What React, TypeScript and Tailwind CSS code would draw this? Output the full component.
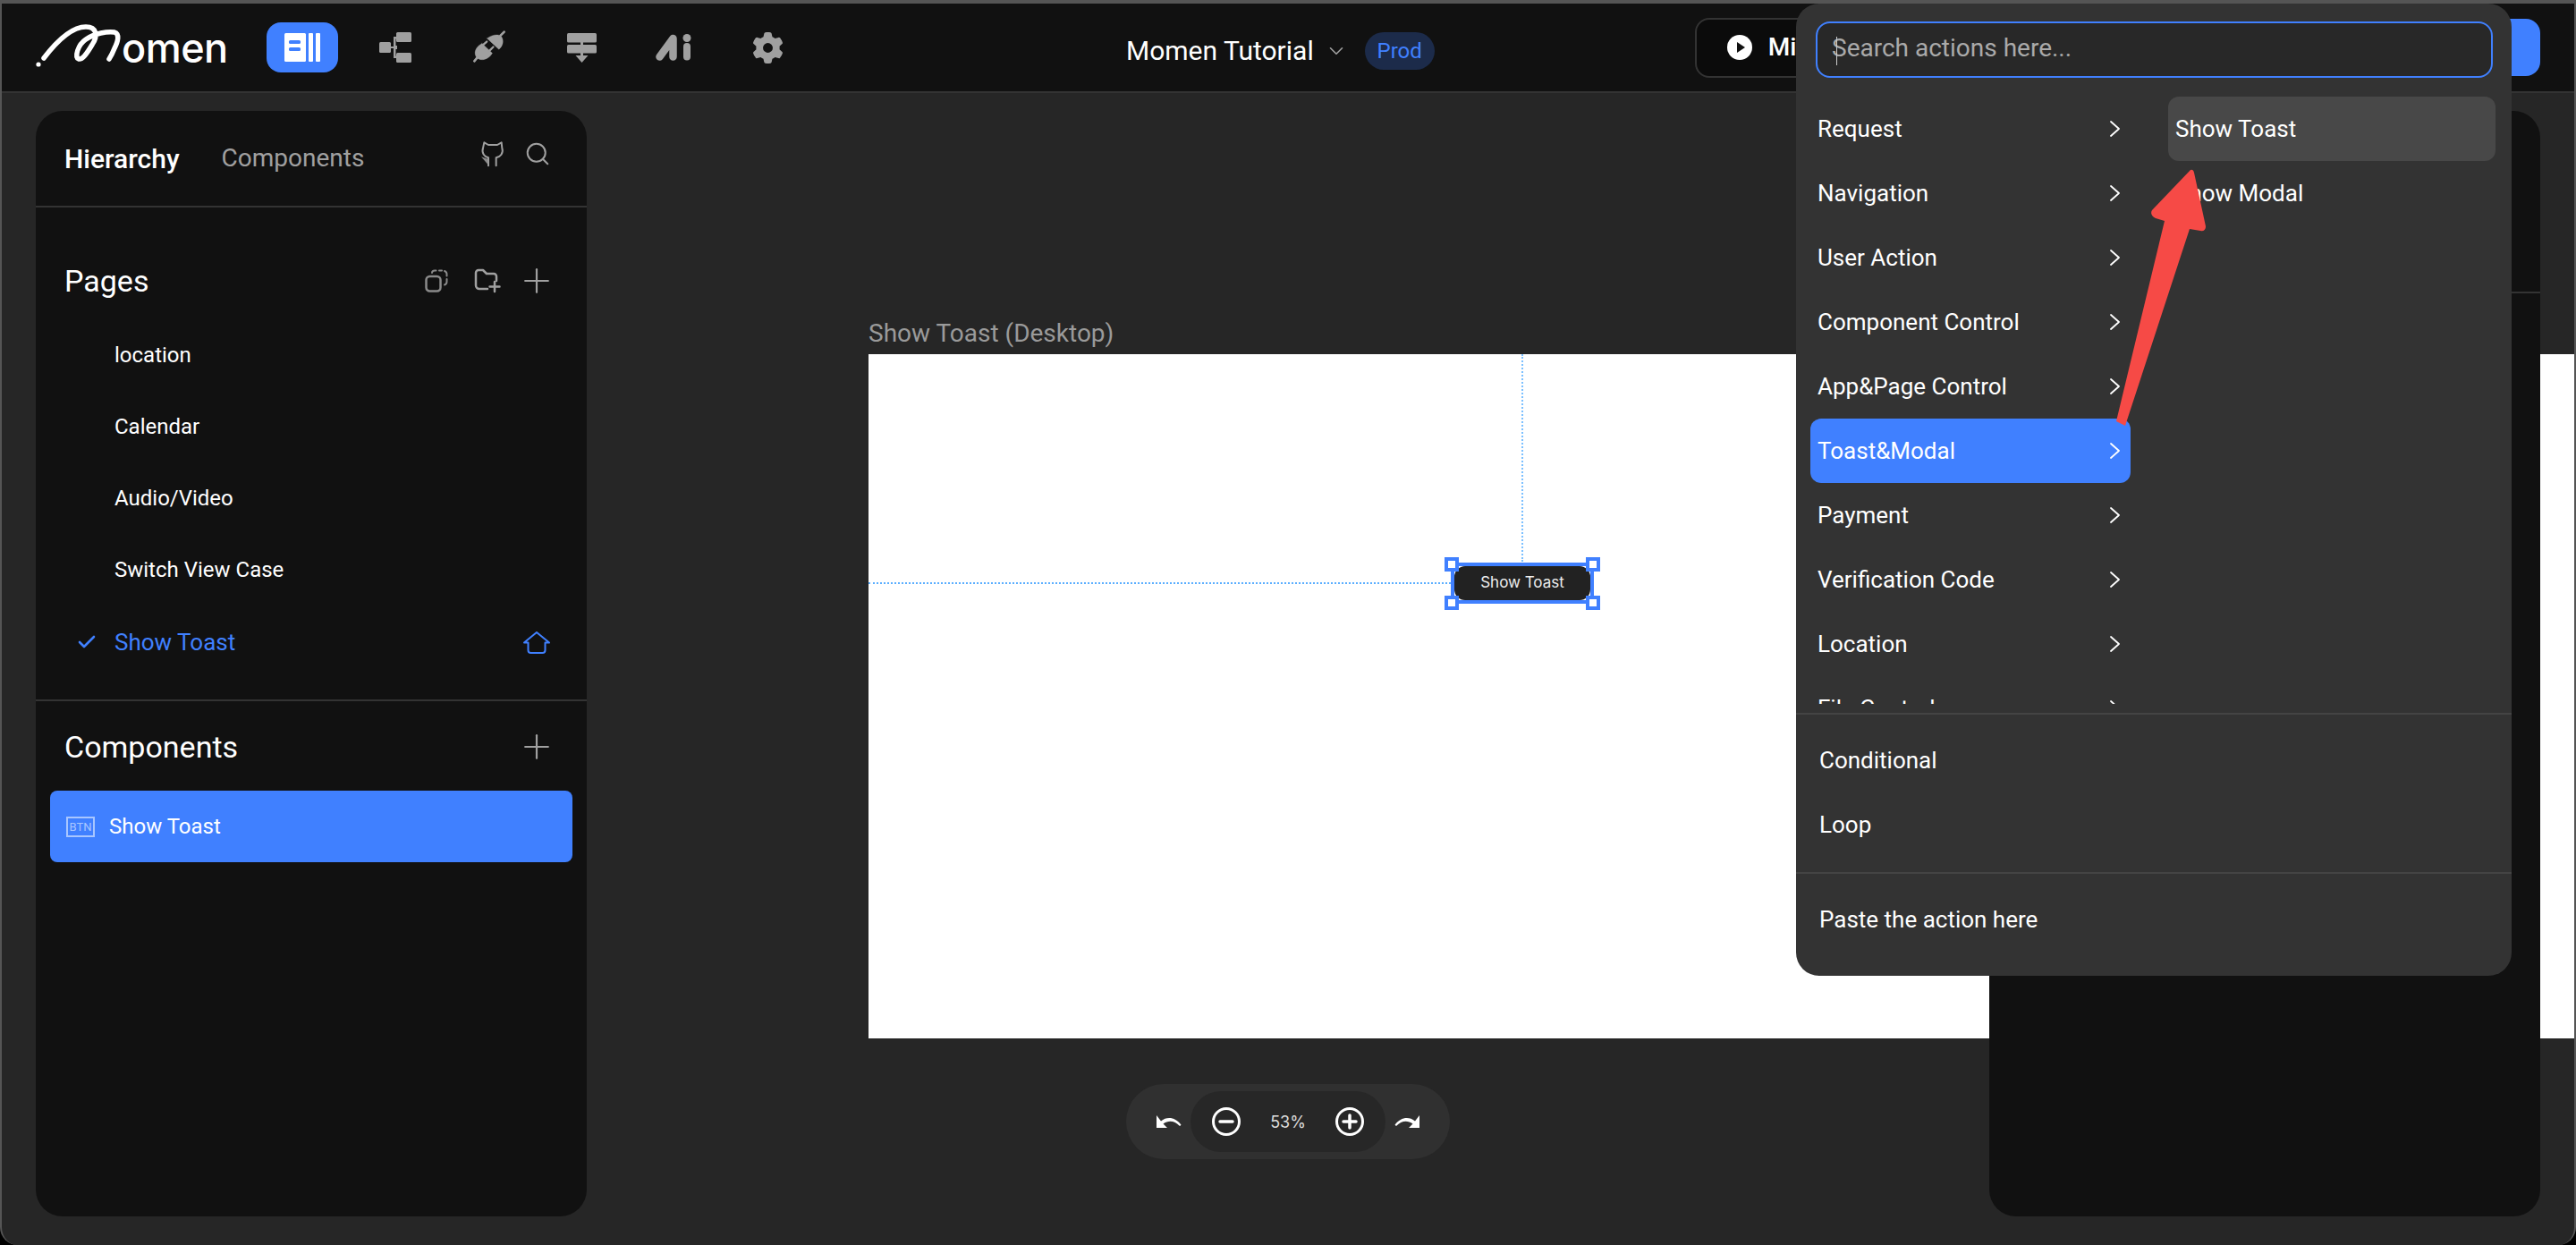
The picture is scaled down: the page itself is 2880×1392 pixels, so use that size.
import { Check, ChevronDown, Plus, Search } from "lucide-react";
import { FaGear } from "react-icons/fa6";

const pages = ["location", "Calendar", "Audio/Video", "Switch View Case"];
const actions = ["Request", "Navigation", "User Action", "Component Control", "App&Page Control", "Toast&Modal", "Payment", "Verification Code", "Location", "File Control"];

function Logo() {
  return (
    <div className="flex items-center w-[218px] h-[60px] relative">
      <svg width="100" height="60" viewBox="40 25 100 60" fill="none" stroke="white" strokeWidth="5.500" strokeLinecap="round" strokeLinejoin="round" className="shrink-0">
        <circle cx="43" cy="74" r="2.6" fill="white" stroke="none" />
        <path d="M49 67 C62 50 80 32 96 32 C108 32 110 42 103 52 C97 62 92 69 88 68 C83 66 87 52 96 46 C106 39 120 37 128 38 C134 40 132 48 128 56 C126 61 124 65 122 68" />
      </svg>
      <span className="font-['Inter',sans-serif] text-[45px] leading-none font-medium text-white -ml-[4px] mt-[1px] tracking-[-0.5px]">omen</span>
    </div>
  );
}

function TreeIcon() {
  return (
    <svg width="36" height="34" viewBox="0 0 36 34" fill="#a0a0a0">
      <rect x="0" y="11" width="13" height="12" rx="1.5" />
      <rect x="19" y="0" width="17" height="11" rx="1.5" />
      <rect x="19" y="23" width="17" height="11" rx="1.5" />
      <path d="M13 16h3V5h4v2.500h-1.500V15H20v4h-1.500v7.500H20V29h-4V18h-3z" />
    </svg>
  );
}

function PlugIcon() {
  return (
    <svg width="38" height="38" viewBox="35 25 115 115" fill="#a0a0a0" stroke="#a0a0a0" strokeLinecap="round" className="-mt-[2px]">
      <path d="M85 55 L125 92 C135 85 142 70 137 55 C135 42 110 36 85 55z" strokeWidth="1" />
      <path d="M130 46 L143 33" strokeWidth="8" />
      <path d="M68 72 L103 105 C92 125 65 135 50 120 C38 105 45 85 68 72z" strokeWidth="1" />
      <path d="M42 132 L52 120" strokeWidth="8" />
      <path d="M70 78 L84 66 M92 98 L106 84" strokeWidth="7" />
    </svg>
  );
}

function StackIcon() {
  return (
    <svg width="33" height="33" viewBox="0 0 33 33" fill="#a0a0a0">
      <rect x="0" y="0" width="33" height="10.500" rx="1.5" />
      <rect x="0" y="13" width="33" height="9.500" rx="1.5" />
      <path d="M15 10h3v3h-3zM15 22h3v3h5.500l-7 8-7-8H15z" />
    </svg>
  );
}

function AiIcon() {
  return (
    <svg width="42" height="30" viewBox="0 0 42 30" fill="none" stroke="#a0a0a0" strokeLinecap="round">
      <path d="M4.500 25.500 L19.500 5 V25.500" strokeWidth="8.500" strokeLinejoin="round" />
      <path d="M35 14 V25.500" strokeWidth="8" />
      <circle cx="35" cy="4.500" r="4.500" fill="#a0a0a0" stroke="none" />
    </svg>
  );
}

function HeaderNav() {
  return (
    <div className="flex items-center">
      <div className="w-[80px] h-[56px] rounded-2xl bg-[#4080ff] flex items-center justify-center">
        <svg width="40" height="32" viewBox="0 0 40 32">
          <rect x="0" y="0" width="24" height="32" rx="1.5" fill="white" />
          <rect x="5" y="8" width="13" height="4" rx="1.5" fill="#4080ff" />
          <rect x="5" y="16" width="13" height="4" rx="1.5" fill="#4080ff" />
          <rect x="27" y="0" width="5" height="32" rx="1" fill="white" />
          <rect x="35" y="0" width="5" height="32" rx="1" fill="white" />
        </svg>
      </div>
      <div className="ml-[46px]"><TreeIcon /></div>
      <div className="ml-[68px]"><PlugIcon /></div>
      <div className="ml-[68px]"><StackIcon /></div>
      <div className="ml-[66px]"><AiIcon /></div>
      <FaGear className="ml-[66px] text-[#a0a0a0]" size={35} />
    </div>
  );
}

function Header() {
  return (
    <header className="h-[100px] shrink-0 bg-[#111111] border-b-2 border-[#333333] flex items-center pl-[38px] pr-[38px]">
      <Logo />
      <div className="ml-[40px]"><HeaderNav /></div>
      <div className="ml-[383px] mt-[8px] flex items-center">
        <span className="text-[30px] leading-none text-white font-['Roboto',sans-serif]">Momen Tutorial</span>
        <ChevronDown className="ml-[12px] text-[#a0a0a0]" size={26} strokeWidth={1.5} />
        <span className="ml-[19px] h-[42px] w-[78px] rounded-full bg-[#1c2b4a] text-[#4080ff] text-[24px] flex items-center justify-center font-['Roboto',sans-serif]">Prod</span>
      </div>
      <div className="ml-[291px] h-[67px] w-[300px] border-2 border-[#333333] rounded-2xl bg-[#0b0b0b] flex items-center pl-[34px]">
        <svg width="28" height="28" viewBox="0 0 28 28">
          <circle cx="14" cy="14" r="14" fill="white" />
          <path d="M11 8l9 6-9 6z" fill="#111111" />
        </svg>
        <span className="ml-[18px] text-[28px] text-white font-['Roboto',sans-serif] font-medium">Mirror</span>
      </div>
      <div className="ml-auto h-[64px] w-[120px] rounded-2xl bg-[#4080ff]" />
    </header>
  );
}

function GithubCat() {
  return (
    <svg width="28" height="30" viewBox="222 20 84 90" fill="none" stroke="#a0a0a0" strokeWidth="6" strokeLinecap="round" strokeLinejoin="round">
      <path d="M252 105 V78 C240 76 228 62 234 46 L238 27 L252 35 H282 L296 27 L298 46 C304 62 292 76 278 78 V105" />
      <path d="M228 75 L250 82 L250 100 Z" fill="#8a8a8a" stroke="none" />
    </svg>
  );
}

function CopyIcon() {
  return (
    <svg width="26" height="26" viewBox="0 0 26 26" fill="none" stroke="#8a8a8a" strokeWidth="2.500" strokeLinecap="round">
      <rect x="1.500" y="8" width="16" height="16.500" rx="4" />
      <path d="M8 4c0-1.500 1-2.500 3-2.500h1.500M16 1.500h3M22 2c1.500.5 2.500 2 2.500 3.500v2M24.500 11v3c0 2-1 3-2.500 3.500" strokeWidth="2" />
    </svg>
  );
}

function FolderPlusIcon() {
  return (
    <svg width="30" height="28" viewBox="0 0 30 28" fill="none" stroke="#a0a0a0" strokeWidth="2.500" strokeLinecap="round" strokeLinejoin="round">
      <path d="M15 23H6a4 4 0 0 1-4-4V5a3 3 0 0 1 3-3h5l4 4h8a3 3 0 0 1 3 3v5" />
      <path d="M23 15v11M17.500 20.500h11" />
    </svg>
  );
}

function HomeIcon() {
  return (
    <svg width="30" height="25" viewBox="0 0 30 25" fill="none" stroke="#4080ff" strokeWidth="2" strokeLinejoin="round">
      <path d="M1 12.500 15 1l14 11.500h-4.500V21a3 3 0 0 1-3 3H8.500a3 3 0 0 1-3-3v-8.500z" />
    </svg>
  );
}

function LeftPanel() {
  return (
    <aside className="w-[616px] h-[1236px] rounded-[30px] bg-[#111111] font-['Roboto',sans-serif] flex flex-col">
      <div className="h-[108px] shrink-0 border-b-2 border-[#333333] flex items-center pl-[32px] pr-[40px]">
        <span className="text-[30px] font-medium text-white">Hierarchy</span>
        <span className="ml-[47px] text-[28px] text-[#a0a0a0]">Components</span>
        <div className="ml-auto -mt-[10px]"><GithubCat /></div>
        <Search className="ml-[22px] -mt-[10px] text-[#a0a0a0]" size={30} strokeWidth={1.6} />
      </div>
      <div className="flex items-center h-[50px] mt-[57px] pl-[32px] pr-[34px]">
        <span className="text-[34px] text-white">Pages</span>
        <div className="ml-auto"><CopyIcon /></div>
        <div className="ml-[29px]"><FolderPlusIcon /></div>
        <Plus className="ml-[18px] text-[#a0a0a0]" size={44} strokeWidth={1.2} />
      </div>
      <ul className="mt-[18px] flex flex-col">
        {pages.map((name) => (
          <li key={name} className="h-[80px] flex items-center pl-[88px] text-[24px] text-white">{name}</li>
        ))}
        <li className="h-[80px] mt-[1px] flex items-center pl-[45px] pr-[41px] text-[26px] text-[#4080ff]">
          <Check size={24} strokeWidth={2.6} />
          <span className="ml-[19px]">Show Toast</span>
          <div className="ml-auto"><HomeIcon /></div>
        </li>
      </ul>
      <div className="mt-[24px] h-[2px] bg-[#333333]" />
      <div className="flex items-center h-[50px] mt-[26px] pl-[32px] pr-[34px]">
        <span className="text-[34px] text-white">Components</span>
        <Plus className="ml-auto text-[#a0a0a0]" size={44} strokeWidth={1.2} />
      </div>
      <div className="mx-[16px] mt-[24px] h-[80px] rounded-lg bg-[#4080ff] flex items-center pl-[18px] text-white">
        <span className="w-[32px] h-[23px] border-2 border-[#a8c6ff] text-[#a8c6ff] text-[13px] leading-none flex items-center justify-center">BTN</span>
        <span className="ml-[16px] text-[24px]">Show Toast</span>
      </div>
    </aside>
  );
}

function RightPanel() {
  return (
    <aside className="w-[616px] h-[1236px] rounded-[30px] bg-[#111111] flex flex-col">
      <div className="h-[204px] shrink-0 border-b-2 border-[#333333]" />
    </aside>
  );
}

function Handle({ className }: { className: string }) {
  return <div className={`absolute w-[16px] h-[16px] border-[4px] border-[#4080ff] bg-white ${className}`} />;
}

function Canvas() {
  return (
    <>
      <div className="absolute left-[969px] top-[252px] text-[28px] leading-[34px] text-[#9a9a9a] font-['Roboto',sans-serif]">Show Toast (Desktop)</div>
      <div className="absolute left-[969px] right-0 top-[292px] h-[765px] bg-white">
        <div className="absolute left-[730px] top-0 h-[232px] border-l-2 border-dotted border-[#7cc0ff]" />
        <div className="absolute left-0 top-[255px] w-[651px] border-t-2 border-dotted border-[#5aaeff]" />
        <div className="absolute left-[651px] top-[233px] w-[160px] h-[46px] border-[4px] border-[#4080ff] flex items-center justify-center">
          <div className="w-[152px] h-[38px] rounded-xl bg-[#222222] text-[#eeeeee] text-[17px] font-['Inter',sans-serif] flex items-center justify-center">Show Toast</div>
          <Handle className="-left-[11px] -top-[10px]" />
          <Handle className="-right-[11px] -top-[10px]" />
          <Handle className="-left-[11px] -bottom-[11px]" />
          <Handle className="-right-[11px] -bottom-[11px]" />
        </div>
      </div>
    </>
  );
}

function ZoomBar() {
  return (
    <div className="absolute left-[1257px] top-[1108px] w-[362px] h-[84px] rounded-full bg-[#303030] flex items-center justify-between px-[34px]">
      <svg width="28" height="16" viewBox="0 0 28 16" fill="white">
        <path d="M0 1v14h12l-4.500-4.500C13 6.500 20 6.500 26 13l1.500-1.200C21 3 12 2 5 7.500z" />
      </svg>
      <div className="w-[218px] h-[68px] rounded-full bg-[#272727] flex items-center justify-between px-[24px]">
        <svg width="32" height="32" viewBox="0 0 32 32" fill="none" stroke="white" strokeWidth="3">
          <circle cx="16" cy="16" r="14.500" />
          <path d="M9 16h14" strokeLinecap="round" strokeWidth="3.500" />
        </svg>
        <span className="text-[18px] text-[#dddddd] font-['Inter',sans-serif]">53%</span>
        <svg width="32" height="32" viewBox="0 0 32 32" fill="none" stroke="white" strokeWidth="3">
          <circle cx="16" cy="16" r="14.500" />
          <path d="M9 16h14M16 9v14" strokeLinecap="round" strokeWidth="3.500" />
        </svg>
      </div>
      <svg width="28" height="16" viewBox="0 0 28 16" fill="white" className="-scale-x-100">
        <path d="M0 1v14h12l-4.500-4.500C13 6.500 20 6.500 26 13l1.500-1.200C21 3 12 2 5 7.500z" />
      </svg>
    </div>
  );
}

function Chevron() {
  return (
    <svg width="13" height="18" viewBox="0 0 13 18" fill="none" stroke="white" strokeWidth="1.800" strokeLinecap="round" strokeLinejoin="round">
      <path d="M2 1l9 8-9 8" />
    </svg>
  );
}

function ActionMenu() {
  return (
    <div className="absolute left-[2008px] top-[4px] w-[800px] h-[1087px] rounded-[26px] bg-[#333333] font-['Roboto',sans-serif] text-white text-[26px] flex flex-col">
      <div className="shrink-0 pl-[22px] pr-[21px] pt-[20px]">
        <div className="relative h-[63px] rounded-2xl border-2 border-[#4080ff] bg-[#282828] flex items-center pl-[16px] pb-[4px] text-[28px] text-[#aaaaaa]">
          <div className="absolute left-[21px] top-[15px] w-[1px] h-[32px] bg-[#cccccc]" />
          Search actions here...
        </div>
      </div>
      <div className="flex h-[679px] shrink-0 mt-[21px] pl-[16px] overflow-hidden">
        <ul className="w-[358px] shrink-0 flex flex-col">
          {actions.map((name) => (
            <li key={name} className={`h-[72px] shrink-0 rounded-xl flex items-center justify-between pl-[8px] pr-[11px] ${name === "Toast&Modal" ? "bg-[#4080ff]" : ""}`}>
              <span>{name}</span>
              <Chevron />
            </li>
          ))}
        </ul>
        <ul className="ml-[42px] w-[366px] shrink-0 flex flex-col">
          <li className="h-[72px] rounded-xl bg-[#484848] flex items-center pl-[8px]">Show Toast</li>
          <li className="h-[72px] flex items-center pl-[8px]">Show Modal</li>
        </ul>
      </div>
      <div className="h-[2px] mt-[10px] bg-[#444444] shrink-0" />
      <div className="flex flex-col pl-[26px] pt-[15px] pb-[17px]">
        <div className="h-[72px] flex items-center">Conditional</div>
        <div className="h-[72px] flex items-center">Loop</div>
      </div>
      <div className="h-[2px] bg-[#444444] shrink-0" />
      <div className="pl-[26px] pt-[15px]">
        <div className="h-[72px] flex items-center">Paste the action here</div>
      </div>
    </div>
  );
}

function RedArrow() {
  return (
    <svg className="absolute left-0 top-0 pointer-events-none" width="2880" height="1392" viewBox="0 0 2880 1392">
      <path
        d="M2449 190 Q2452 189 2453 193 L2466 253 Q2466 259 2460 258 L2448 256 L2376 476 L2366 471 L2420 247 L2410 244 Q2403 240 2406 235 Z"
        fill="#f64a46"
      />
    </svg>
  );
}

export default function App() {
  return (
    <div className="relative w-[2880px] h-[1392px] overflow-hidden bg-black">
      <div className="w-full h-full flex flex-col border-t-4 border-l-2 border-r-2 border-[#555555] rounded-b-[20px] bg-[#262626] overflow-hidden">
        <Header />
        <main className="relative flex-1 flex justify-between pl-[38px] pr-[38px] pt-[20px]">
          <Canvas />
          <div className="relative"><LeftPanel /></div>
          <div className="relative"><RightPanel /></div>
          <ZoomBar />
        </main>
      </div>
      <ActionMenu />
      <RedArrow />
    </div>
  );
}
